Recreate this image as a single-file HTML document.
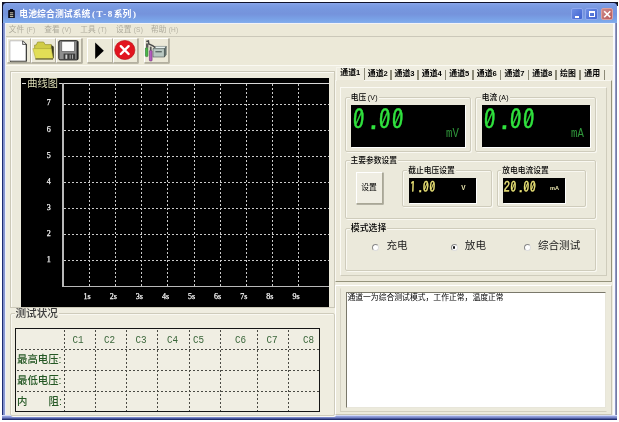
<!DOCTYPE html>
<html lang="zh-CN">
<head>
<meta charset="utf-8">
<title>电池综合测试系统(T-8系列)</title>
<style>
html,body{margin:0;padding:0;}
body{width:619px;height:422px;position:relative;overflow:hidden;background:#fff;
  font-family:"Liberation Sans","Noto Sans CJK SC",serif;font-size:8.5px;color:#000;}
.abs,.abs *{position:absolute;box-sizing:border-box;}
.abs{left:0;top:0;width:619px;height:422px;will-change:transform;filter:blur(0.35px);}
.t{white-space:nowrap;line-height:1;}
#win{left:2px;top:2px;width:615px;height:418px;background:#efede0;}
#topblack{left:2px;top:2px;width:615.4px;height:20.6px;background:#10122a;}
#rightblack{left:616.6px;top:2px;width:0.9px;height:4px;background:#111;}
#title{left:3.1px;top:3.3px;width:613.6px;height:19.3px;border-radius:3.5px 3.5px 0 0;
  background:linear-gradient(to bottom,#8aa6ea 0,#7c9ce3 12%,#7696de 35%,#7593dc 55%,#79a1e6 80%,#7da8ea 92%,#86aeec 100%);}
#bl{left:2px;top:22.6px;width:3.8px;height:397.4px;background:linear-gradient(to right,#1c2c72 0,#1c2c72 1px,#7c8cc8 1.2px,#8c9ad2 2.7px,#e2e8ff 2.9px,#eef0fa 3.8px);}
#br{left:612.6px;top:22.6px;width:4.5px;height:397.4px;background:linear-gradient(to right,#fbfcff 0,#f4f6ff 1.8px,#9ea6d0 2.2px,#7880aa 3px,#6c7299 4.5px);}
#bb{left:2px;top:415px;width:615.2px;height:4.8px;background:linear-gradient(to bottom,#e4e9fb 0,#b9c3f1 1.2px,#8492d2 1.6px,#6f7dc2 3.3px,#2a3778 3.7px,#1d2a6c 4.8px);}
.gb{border:1px solid #cfccbc;box-shadow:1px 1px 0 #f9f8f1, inset 1px 1px 0 #f9f8f1;border-radius:2px;}
.gl{background:#ece9d8;padding:0 1px;font-weight:500;}
.lcd{background:#000;box-shadow:1px 1px 0 #fff;}
.btn{border:1px solid;border-color:#fff #b4b0a0 #b4b0a0 #fff;box-shadow:0.5px 0.5px 0 #8a8778;}
.vd{width:1px;background:repeating-linear-gradient(to bottom,#cacaca 0,#cacaca 2px,transparent 2px,transparent 4px);}
.hd{height:1px;background:repeating-linear-gradient(to right,#cacaca 0,#cacaca 2px,transparent 2px,transparent 4px);}
.yl{font-family:"Liberation Serif",serif;font-size:8px;color:#f4f4f4;-webkit-text-stroke:0.25px #f4f4f4;}
.vd2{width:1px;background:repeating-linear-gradient(to bottom,#4a4a44 0,#4a4a44 2px,transparent 2px,transparent 4px);}
.hd2{height:1px;background:repeating-linear-gradient(to right,#4a4a44 0,#4a4a44 2.2px,transparent 2.2px,transparent 4px);}
.cl{font-family:"Liberation Mono",monospace;font-size:9.3px;color:#3a663a;transform:scaleY(1.2);transform-origin:0 0;}
.rl{font-size:10.4px;color:#255825;font-weight:500;}
.tn{position:static;font-family:"Liberation Sans",sans-serif;font-size:7.6px;font-weight:bold;line-height:0}
.tabt{font-size:7.9px;color:#000;font-weight:700;}
.big{font-size:24px;color:#30e23e;transform:scale(1,1.12) skewX(-4deg);-webkit-text-stroke:0.35px #30e23e;}
.big b{position:static;display:inline-block;width:13px;text-align:center;font-weight:normal;}
.sm{font-size:12px;color:#eee678;transform:scale(1,1.2) skewX(-4deg);-webkit-text-stroke:0.3px #eee678;}
.big b.d{text-indent:5px}.sm b.d{text-indent:2.5px}
.sm b{position:static;display:inline-block;width:6.5px;text-align:center;font-weight:normal;}
.unit{font-family:"Liberation Mono",monospace;font-size:13.5px;color:#2f963a;transform:scaleX(0.79);transform-origin:0 0;}
.unit2{font-family:"Liberation Sans",sans-serif;font-weight:bold;font-size:5.6px;color:#ece8b0;}
.la{position:static;font-family:"Liberation Sans",sans-serif;font-size:7px;margin-left:1.5px;letter-spacing:0.3px}
.rad{font-size:10.6px;color:#1a1a1a;font-weight:400;}
.mn{color:#aeab9c;font-size:7.7px;}
.ml{position:static;font-family:"Liberation Sans",sans-serif;font-size:6.5px;letter-spacing:0.25px;margin-left:2.3px;color:#b4b1a2}
.tl{position:static;font-family:"Liberation Serif",serif;font-size:9px;letter-spacing:1.5px;margin-left:1.5px}
.seg{font-family:"IPAGothic","DejaVu Sans Mono","Liberation Mono",monospace;transform-origin:0 0;}
</style>
</head>
<body>
<div class="abs" id="root">
  <div id="win"></div>
  <div id="topblack"></div>
  <div id="rightblack"></div>
  <div id="title"></div>
  <!-- title icon -->
  <svg style="left:8.1px;top:8.6px" width="7" height="9.6" viewBox="0 0 7 9.6"><rect x="2" y="0" width="3" height="1.6" fill="#0a0a18"/><rect x="0.2" y="0.9" width="6.6" height="8.7" rx="0.9" fill="#0a0a18"/><rect x="1.9" y="3.4" width="3.4" height="0.9" fill="#e8e2c4"/><rect x="1.9" y="5.3" width="3.4" height="0.9" fill="#e8e2c4"/><rect x="1.9" y="7.2" width="3.4" height="0.9" fill="#e8e2c4"/></svg>
  <div class="t" style="left:19.3px;top:9.7px;font-size:8.8px;font-weight:bold;color:#fff;letter-spacing:0.1px">电池综合测试系统<span class="tl">(T-8</span>系列<span class="tl">)</span></div>
  <!-- caption buttons -->
  <div style="left:571px;top:8.1px;width:12px;height:12px;background:linear-gradient(135deg,#6f8fe4,#3f62cf);border:1px solid #8fa8ee;border-radius:2px"></div>
  <div style="left:574.5px;top:16px;width:4.5px;height:2px;background:#fff"></div>
  <div style="left:585.3px;top:8.1px;width:13px;height:12px;background:linear-gradient(135deg,#6f8fe4,#3f62cf);border:1px solid #8fa8ee;border-radius:2px"></div>
  <div style="left:588.5px;top:10.6px;width:6.8px;height:6.6px;border:1px solid #fff;border-top-width:2px"></div>
  <div style="left:600.5px;top:8.1px;width:12.5px;height:12px;background:linear-gradient(135deg,#cf8a8a,#b85a5a);border:1px solid #dba0a0;border-radius:2px"></div>
  <svg style="left:600.5px;top:8px" width="12.5" height="12.5" viewBox="0 0 12.5 12.5"><path d="M3.2 3.2 L9.3 9.3 M9.3 3.2 L3.2 9.3" stroke="#fff" stroke-width="1.6" fill="none"/></svg>
  <div id="bl"></div><div id="br"></div><div id="bb"></div>

  <!-- menu -->
  <div style="left:5.8px;top:22.6px;width:607.7px;height:14px;background:#ece9d8"></div>
  <div style="left:5.8px;top:22.6px;width:607.7px;height:1px;background:#f3f3f6"></div>
  <div class="t mn" style="left:8.7px;top:26.2px">文件<span class="ml">(F)</span></div>
  <div class="t mn" style="left:44.3px;top:26.2px">查看<span class="ml">(V)</span></div>
  <div class="t mn" style="left:80.3px;top:26.2px">工具<span class="ml">(T)</span></div>
  <div class="t mn" style="left:116.0px;top:26.2px">设置<span class="ml">(S)</span></div>
  <div class="t mn" style="left:151.0px;top:26.2px">帮助<span class="ml">(H)</span></div>
  <div style="left:5.8px;top:36px;width:607.7px;height:1px;background:#cbc8b9"></div>

  <!-- toolbar -->
  <div id="tb" style="left:0;top:0">
    <div style="left:5.8px;top:37px;width:607.7px;height:28.3px;background:#ece9d8"></div>
    <div style="left:5.8px;top:65.3px;width:607.7px;height:1px;background:#faf9f2"></div>
    <!-- toolbar buttons: raised -->
    <div class="btn" style="left:7px;top:38px;width:23.8px;height:25px"></div>
    <div class="btn" style="left:31px;top:38px;width:25px;height:25px"></div>
    <div class="btn" style="left:56.3px;top:38px;width:25.7px;height:25px"></div>
    <div class="btn" style="left:87px;top:38px;width:25.5px;height:25px"></div>
    <div class="btn" style="left:112.8px;top:38px;width:25.2px;height:25px"></div>
    <div class="btn" style="left:143.7px;top:38px;width:25px;height:25px"></div>
    <!-- new doc -->
    <svg style="left:0;top:0" width="180" height="70" viewBox="0 0 180 70">
      <path d="M9.9 40.8 H22.6 L26.2 44.5 V61 H9.9 Z" fill="#fff"/>
      <path d="M9.9 61 V40.8 H22.6" fill="none" stroke="#b4b4b4" stroke-width="0.8"/>
      <path d="M22.6 40.8 L26.3 44.5 V61.2 H9.9" fill="none" stroke="#222" stroke-width="1.1"/>
      <path d="M22.6 40.8 V44.5 H26.2" fill="#ddd" stroke="#444" stroke-width="0.8"/>
      <path d="M11 62 H27" stroke="#9a988a" stroke-width="0.9"/>
      <!-- folder -->
      <path d="M36.2 45 L37.6 42 H43.6 L45.2 44.6 H51.4 V49 H34.6 V45 Z" fill="#d0cc46" stroke="#8a8628" stroke-width="0.6"/>
      <path d="M51.4 45 L53.8 46.8 V57.6 L52.6 59.2 L51.4 49 Z" fill="#3c3a1c"/>
      <path d="M32.9 48.6 H51.2 L53.2 58.6 H35.6 Z" fill="#e2de56" stroke="#a8a434" stroke-width="0.5"/>
      <path d="M35.4 59 H53" stroke="#5e5c22" stroke-width="1.2"/>
      <!-- floppy -->
      <rect x="58.8" y="40.7" width="19.2" height="19.2" rx="1.3" fill="#8e8e8e" stroke="#1c1c1c" stroke-width="1"/>
      <rect x="76.6" y="41.5" width="1.6" height="18" fill="#222"/>
      <rect x="61.8" y="41.3" width="12.6" height="10" fill="#fbfbfb" stroke="#555" stroke-width="0.6"/>
      <rect x="63.6" y="53.6" width="11.6" height="5.8" fill="#3a3a3a"/>
      <rect x="65.4" y="54.6" width="1.9" height="4.2" fill="#cfcfcf"/>
      <rect x="69.6" y="54.6" width="1.1" height="4.2" fill="#a8a8a8"/>
      <rect x="72" y="54.6" width="1.1" height="4.2" fill="#a8a8a8"/>
      <!-- play -->
      <path d="M95.2 42.4 L103.8 50.7 L95.2 59 Z" fill="#000"/>
      <!-- stop -->
      <ellipse cx="124.8" cy="50" rx="10.1" ry="9.5" fill="#e2141e" stroke="#b81018" stroke-width="0.7"/>
      <path d="M120.8 46.2 L128.6 54 M128.6 46.2 L120.8 54" stroke="#fff" stroke-width="2.4" stroke-linecap="round"/>
      <!-- device -->
      <path d="M153 48.8 L155.6 46.4 H166.2 L165.7 48.8 Z" fill="#e8f0ee" stroke="#566" stroke-width="0.5"/>
      <rect x="153" y="48.8" width="11.4" height="8.2" fill="#b9c8c2" stroke="#4a5654" stroke-width="0.6"/>
      <path d="M164.4 48.8 L166.2 46.4 V54.8 L164.4 57 Z" fill="#6c7a78" stroke="#3a4644" stroke-width="0.5"/>
      <rect x="155.4" y="51" width="6.4" height="1.4" fill="#5c6a68"/>
      <path d="M146.2 41.4 L148.4 41 L148.8 44 L152.6 45.6 L155.4 47.6" stroke="#4a4a4a" stroke-width="1.5" fill="none"/>
      <rect x="146" y="43.4" width="2.4" height="4.4" fill="#5a5a5a"/>
      <rect x="145.4" y="47.8" width="2.5" height="8.8" rx="0.8" fill="#48b848" stroke="#1f5a1f" stroke-width="0.5"/>
      <rect x="149.8" y="46.6" width="1.8" height="4" fill="#5a5a5a"/>
      <rect x="149.4" y="50.4" width="2.7" height="10.6" rx="0.8" fill="#b45cc0" stroke="#5a2060" stroke-width="0.5"/>
    </svg>
  </div>

  <div style="left:9.7px;top:70.5px;width:325px;height:237px;background:#eceadc;border:1px solid #cbc8b8;box-shadow:inset 1px 1px 0 #fbfaf4"></div>
  <div id="chart" style="left:21.3px;top:77.7px;width:307.6px;height:228.9px;background:#000"></div>
  <div style="left:22px;top:83px;width:4px;height:1px;background:#d8d8d8"></div>
  <div style="left:59px;top:83px;width:270px;height:1px;background:#d8d8d8"></div>
  <div class="t" style="left:27.3px;top:78.8px;font-size:10.2px;color:#dcdcb4">曲线图</div>
  <div style="left:62.3px;top:83px;width:1.6px;height:204px;background:#b8b8b8"></div>
  <div style="left:63px;top:285.9px;width:266px;height:1.6px;background:#b8b8b8"></div>
  <div class="vd" style="left:89px;top:84px;height:202px"></div>
  <div class="vd" style="left:115px;top:84px;height:202px"></div>
  <div class="vd" style="left:141px;top:84px;height:202px"></div>
  <div class="vd" style="left:167px;top:84px;height:202px"></div>
  <div class="vd" style="left:194px;top:84px;height:202px"></div>
  <div class="vd" style="left:220px;top:84px;height:202px"></div>
  <div class="vd" style="left:246px;top:84px;height:202px"></div>
  <div class="vd" style="left:272px;top:84px;height:202px"></div>
  <div class="vd" style="left:298px;top:84px;height:202px"></div>
  <div class="hd" style="left:64px;top:104px;width:265px"></div>
  <div class="hd" style="left:64px;top:130px;width:265px"></div>
  <div class="hd" style="left:64px;top:156px;width:265px"></div>
  <div class="hd" style="left:64px;top:182px;width:265px"></div>
  <div class="hd" style="left:64px;top:208px;width:265px"></div>
  <div class="hd" style="left:64px;top:234px;width:265px"></div>
  <div class="hd" style="left:64px;top:260px;width:265px"></div>
  <div class="t yl" style="left:46.7px;top:99.4px">7</div>
  <div class="t yl" style="left:46.7px;top:125.5px">6</div>
  <div class="t yl" style="left:46.7px;top:151.6px">5</div>
  <div class="t yl" style="left:46.7px;top:177.7px">4</div>
  <div class="t yl" style="left:46.7px;top:203.8px">3</div>
  <div class="t yl" style="left:46.7px;top:229.9px">2</div>
  <div class="t yl" style="left:46.7px;top:256.0px">1</div>
  <div class="t yl" style="left:83.6px;top:292.5px">1s</div>
  <div class="t yl" style="left:109.7px;top:292.5px">2s</div>
  <div class="t yl" style="left:135.8px;top:292.5px">3s</div>
  <div class="t yl" style="left:161.9px;top:292.5px">4s</div>
  <div class="t yl" style="left:188.0px;top:292.5px">5s</div>
  <div class="t yl" style="left:214.1px;top:292.5px">6s</div>
  <div class="t yl" style="left:240.2px;top:292.5px">7s</div>
  <div class="t yl" style="left:266.3px;top:292.5px">8s</div>
  <div class="t yl" style="left:292.5px;top:292.5px">9s</div>

  <div class="gb" style="left:10px;top:313px;width:325px;height:103px"></div>
  <div class="t gl" style="left:14.5px;top:307.6px;font-size:10.6px;color:#3a3a3a;background:#efede0">测试状况</div>
  <div style="left:15px;top:328px;width:305px;height:84px;border:1.8px solid #151515;background:#f0eee3"></div>
  <div class="vd2" style="left:63.5px;top:330px;height:81px"></div>
  <div class="vd2" style="left:94.8px;top:330px;height:81px"></div>
  <div class="vd2" style="left:125.8px;top:330px;height:81px"></div>
  <div class="vd2" style="left:157.4px;top:330px;height:81px"></div>
  <div class="vd2" style="left:188.6px;top:330px;height:81px"></div>
  <div class="vd2" style="left:219.9px;top:330px;height:81px"></div>
  <div class="vd2" style="left:256.5px;top:330px;height:81px"></div>
  <div class="vd2" style="left:288.0px;top:330px;height:81px"></div>
  <div class="hd2" style="left:17px;top:349.0px;width:302px"></div>
  <div class="hd2" style="left:17px;top:370.0px;width:302px"></div>
  <div class="hd2" style="left:17px;top:391.0px;width:302px"></div>
  <div class="t cl" style="left:72.5px;top:335px">C1</div>
  <div class="t cl" style="left:104.0px;top:335px">C2</div>
  <div class="t cl" style="left:135.5px;top:335px">C3</div>
  <div class="t cl" style="left:167.0px;top:335px">C4</div>
  <div class="t cl" style="left:193.0px;top:335px">C5</div>
  <div class="t cl" style="left:235.0px;top:335px">C6</div>
  <div class="t cl" style="left:266.5px;top:335px">C7</div>
  <div class="t cl" style="left:303.0px;top:335px">C8</div>
  <div class="t rl" style="left:17px;top:355px">最高电压:</div>
  <div class="t rl" style="left:17px;top:375.5px">最低电压:</div>
  <div class="t rl" style="left:17px;top:397px">内</div>
  <div class="t rl" style="left:48.5px;top:397px">阻:</div>

  <div style="left:335px;top:80px;width:277.2px;height:201.5px;background:#ebe8d9;border:1px solid;border-width:1px 1.3px 1.3px 1px;border-color:#f8f7f0 #95937c #95937c #f8f7f0"></div>
  <div style="left:340px;top:87px;width:266.5px;height:189px;background:#ebe9db;border:1px solid;border-color:#fbfaf4 #cfccbc #cfccbc #fbfaf4"></div>
  <div style="left:363.9px;top:68.0px;width:1.2px;height:12.0px;background:#8c8a78"></div>
  <div class="t tabt" style="left:336.0px;top:69.3px;width:28.5px;text-align:center">通道<span class="tn">1</span></div>
  <div style="left:390.4px;top:69.5px;width:1.2px;height:10.0px;background:#8c8a78"></div>
  <div class="t tabt" style="left:364.5px;top:70.3px;width:26.5px;text-align:center">通道<span class="tn">2</span></div>
  <div style="left:417.4px;top:69.5px;width:1.2px;height:10.0px;background:#8c8a78"></div>
  <div class="t tabt" style="left:391.0px;top:70.3px;width:27.0px;text-align:center">通道<span class="tn">3</span></div>
  <div style="left:444.9px;top:69.5px;width:1.2px;height:10.0px;background:#8c8a78"></div>
  <div class="t tabt" style="left:418.0px;top:70.3px;width:27.5px;text-align:center">通道<span class="tn">4</span></div>
  <div style="left:472.4px;top:69.5px;width:1.2px;height:10.0px;background:#8c8a78"></div>
  <div class="t tabt" style="left:445.5px;top:70.3px;width:27.5px;text-align:center">通道<span class="tn">5</span></div>
  <div style="left:499.9px;top:69.5px;width:1.2px;height:10.0px;background:#8c8a78"></div>
  <div class="t tabt" style="left:473.0px;top:70.3px;width:27.5px;text-align:center">通道<span class="tn">6</span></div>
  <div style="left:527.9px;top:69.5px;width:1.2px;height:10.0px;background:#8c8a78"></div>
  <div class="t tabt" style="left:500.5px;top:70.3px;width:28.0px;text-align:center">通道<span class="tn">7</span></div>
  <div style="left:555.4px;top:69.5px;width:1.2px;height:10.0px;background:#8c8a78"></div>
  <div class="t tabt" style="left:528.5px;top:70.3px;width:27.5px;text-align:center">通道<span class="tn">8</span></div>
  <div style="left:579.4px;top:69.5px;width:1.2px;height:10.0px;background:#8c8a78"></div>
  <div class="t tabt" style="left:556.0px;top:70.3px;width:24.0px;text-align:center">绘图</div>
  <div style="left:603.9px;top:69.5px;width:1.2px;height:10.0px;background:#8c8a78"></div>
  <div class="t tabt" style="left:580.0px;top:70.3px;width:24.5px;text-align:center">通用</div>
  <div style="left:336px;top:80px;width:28px;height:1px;background:#ebe8d9"></div>
  <div style="left:336px;top:67px;width:28.5px;height:1px;background:#f6f5ec"></div>
  <div style="left:335.5px;top:67.5px;width:1px;height:13px;background:#f6f5ec"></div>
  <div class="gb" style="left:345.0px;top:97.0px;width:126.0px;height:54.5px"></div>
  <div class="t gl" style="left:349.8px;top:94.1px;font-size:7.7px;background:#ebe9db">电压<span class="la">(V)</span></div>
  <div class="gb" style="left:474.5px;top:97.0px;width:121.0px;height:54.5px"></div>
  <div class="t gl" style="left:480.8px;top:94.1px;font-size:7.7px;background:#ebe9db">电流<span class="la">(A)</span></div>
  <div class="gb" style="left:345.0px;top:160.0px;width:250.5px;height:58.5px"></div>
  <div class="t gl" style="left:349.6px;top:157.1px;font-size:7.75px;background:#ebe9db">主要参数设置</div>
  <div class="gb" style="left:402.0px;top:170.0px;width:90.0px;height:37.0px"></div>
  <div class="t gl" style="left:407.2px;top:167.2px;font-size:7.75px;background:#ebe9db">截止电压设置</div>
  <div class="gb" style="left:496.5px;top:170.0px;width:89.5px;height:37.0px"></div>
  <div class="t gl" style="left:501.2px;top:167.2px;font-size:7.75px;background:#ebe9db">放电电流设置</div>
  <div class="gb" style="left:345.0px;top:228.0px;width:250.5px;height:43.0px"></div>
  <div class="t gl" style="left:349.8px;top:224px;font-size:8.9px;background:#ebe9db">模式选择</div>
  <div class="lcd" style="left:351px;top:104.5px;width:113.9px;height:42.1px"></div>
  <div class="lcd" style="left:481.7px;top:104.5px;width:108.6px;height:42.1px"></div>
  <div class="lcd" style="left:408.5px;top:178px;width:67px;height:24.5px"></div>
  <div class="lcd" style="left:502.5px;top:178px;width:62px;height:24.5px"></div>
  <div class="t seg big" style="left:353.1px;top:104.5px"><b>0</b><b class="d">.</b><b>0</b><b>0</b></div>
  <div class="t seg big" style="left:483.9px;top:104.5px"><b>0</b><b class="d">.</b><b>0</b><b>0</b></div>
  <div class="t unit" style="left:445.5px;top:126.6px">mV</div>
  <div class="t unit" style="left:570.8px;top:126.6px">mA</div>
  <div class="t seg sm" style="left:409.5px;top:178.5px"><b>1</b><b class="d">.</b><b>0</b><b>0</b></div>
  <div class="t seg sm" style="left:504.2px;top:178.5px"><b>2</b><b>0</b><b class="d">.</b><b>0</b><b>0</b></div>
  <div class="t unit2" style="left:461.3px;top:184.6px;font-size:6.4px">V</div>
  <div class="t unit2" style="left:550px;top:186.3px">mA</div>
  <div style="left:355.5px;top:171.5px;width:27px;height:32px;background:#efede2;border:1px solid;border-color:#fff #a9a796 #a9a796 #fff;box-shadow:0.6px 0.6px 0 #8f8d7e"></div>
  <div class="t" style="left:355.5px;top:183.5px;width:27px;text-align:center;font-size:7.8px">设置</div>
  <div style="left:371.8px;top:244.0px;width:7px;height:7px;border-radius:50%;background:#fff;border:1px solid;border-color:#888 #ddd #ddd #888"></div>
  <div style="left:450.7px;top:244.0px;width:7px;height:7px;border-radius:50%;background:#fff;border:1px solid;border-color:#888 #ddd #ddd #888"></div>
  <div style="left:452.9px;top:246.2px;width:2.6px;height:2.6px;border-radius:50%;background:#111"></div>
  <div style="left:523.8px;top:244.0px;width:7px;height:7px;border-radius:50%;background:#fff;border:1px solid;border-color:#888 #ddd #ddd #888"></div>
  <div class="t rad" style="left:386.5px;top:239.8px">充电</div>
  <div class="t rad" style="left:464.8px;top:239.8px">放电</div>
  <div class="t rad" style="left:537.9px;top:239.8px">综合测试</div>
  <div style="left:335px;top:284.5px;width:277.2px;height:130.5px;background:#eceadc;border:1px solid;border-color:#fff #c9c6b6 #c9c6b6 #fff"></div>
  <div style="left:340px;top:287.5px;width:267px;height:124px;border:1px solid;border-color:transparent transparent #d2cfbf #d6d3c4"></div>
  <div style="left:345.6px;top:292px;width:260.2px;height:116px;background:#fff;border:1px solid;border-color:#7a786a #e8e6da #e8e6da #7a786a"></div>
  <div class="t" style="left:347.4px;top:294.3px;font-size:7.82px">通道一为综合测试模式，工作正常，温度正常</div>
</div>
</body>
</html>
